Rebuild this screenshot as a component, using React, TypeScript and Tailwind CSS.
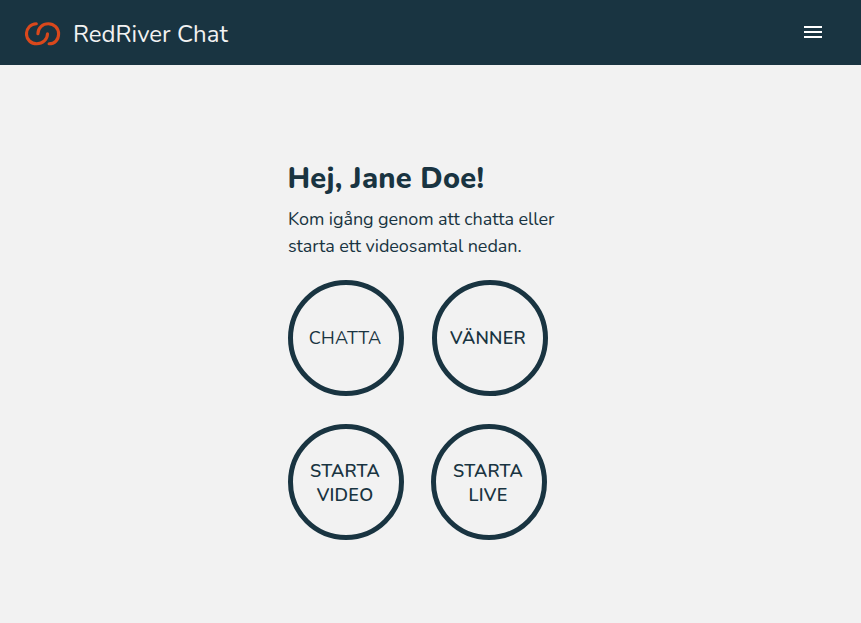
const ring =
  'flex size-[116px] items-center justify-center rounded-full border-[5px] border-[#193441] text-center text-[18px] leading-6 tracking-[0.25px] text-[#193441]';

function Logo() {
  return (
    <svg width="36" height="24" viewBox="0 0 36 24" fill="none" stroke="#d9481c" strokeWidth="3.1" strokeLinecap="round" className="shrink-0">
      <path d="M11.3 1.7C5.6 1.7 1.5 6.4 1.5 12s4.5 9.8 10.3 9.8S22.5 17.5 22.5 11.8" />
      <path d="M12.9 11.8C12.9 6 17.5 1.7 23.3 1.7S33.6 6.2 33.6 12s-4 9.8-9.5 9.8" />
    </svg>
  );
}

export default function App() {
  return (
    <div className="min-h-screen bg-[#f2f2f2] font-['Nunito','Lato',sans-serif] text-[#193441]">
      <header className="flex h-[65px] items-center justify-between bg-[#193441] pr-[39px] pl-[25px] text-[#f2f2f2]">
        <div className="flex items-center gap-3 pt-[2px]">
          <Logo />
          <span className="pt-px text-[24px] leading-8">RedRiver Chat</span>
        </div>
        <button aria-label="Meny" className="mb-px flex w-[18px] flex-col gap-[3px]">
          <span className="h-[2px] w-full bg-white" />
          <span className="h-[2px] w-full bg-white" />
          <span className="h-[2px] w-full bg-white" />
        </button>
      </header>
      <main className="ml-[288px] w-[290px] pt-[94px]">
        <h1 className="-ml-[0.5px] text-[29px] leading-10 font-extrabold tracking-[0.25px] whitespace-nowrap">Hej, Jane Doe!</h1>
        <p className="mt-[7px] text-[18px] leading-[27px] tracking-[-0.07px] whitespace-nowrap">
          <span className="block">Kom igång genom att chatta eller</span>
          <span className="block">starta ett videosamtal nedan.</span>
        </p>
        <div className="mt-5 flex gap-7">
          <button className={ring + ' pr-[2px]'}><span>CHATTA</span></button>
          <button className={ring + ' pr-[4px] font-semibold'}><span>VÄNNER</span></button>
        </div>
        <div className="mt-7 flex gap-[27px]">
          <button className={ring + ' pt-px pr-[2px] font-semibold'}><span>STARTA<br />VIDEO</span></button>
          <button className={ring + ' pt-px pr-[2px] font-semibold'}><span>STARTA<br />LIVE</span></button>
        </div>
      </main>
    </div>
  );
}
